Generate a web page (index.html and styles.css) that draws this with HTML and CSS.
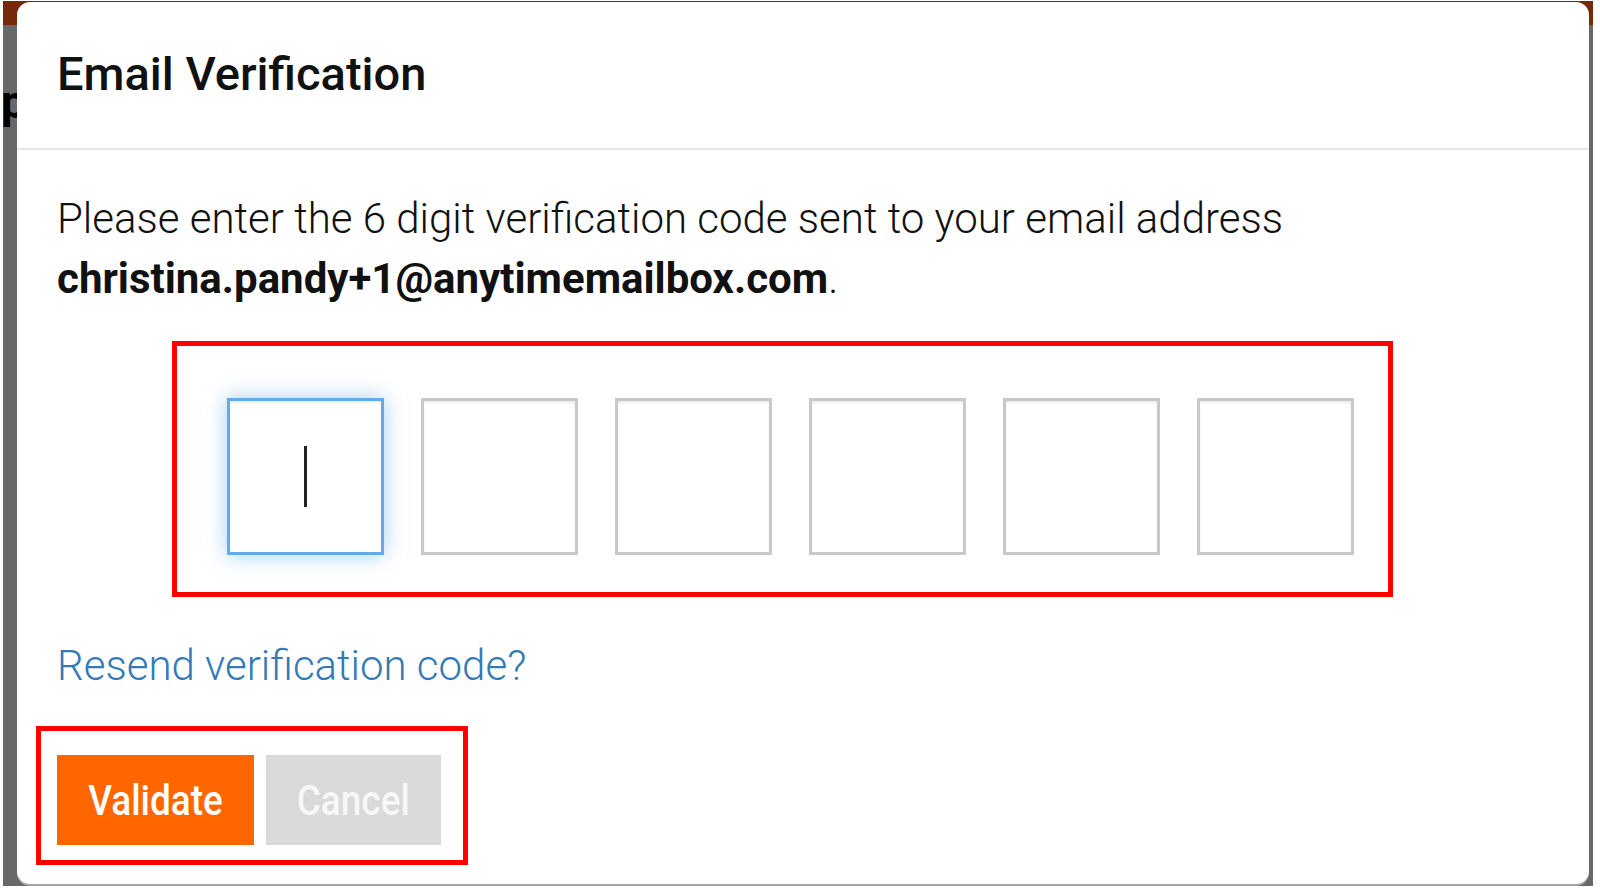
FILE: index.html
```html
<!DOCTYPE html>
<html lang="en">
<head>
<meta charset="utf-8">
<title>Email Verification</title>
<link rel="stylesheet" href="styles.css">
</head>
<body>
<div class="screen">
  <span class="bg-glyph">p</span>
  <div class="modal">
    <div class="modal-header">
      <h4 class="modal-title">Email Verification</h4>
    </div>
    <div class="modal-body">
      <p class="intro">Please enter the 6 digit verification code sent to your email address <strong>christina.pandy+1@anytimemailbox.com</strong>.</p>
      <div class="annot otp-annot">
        <div class="otp">
          <div class="otp-box is-focused"><span class="caret"></span></div>
          <div class="otp-box"></div>
          <div class="otp-box"></div>
          <div class="otp-box"></div>
          <div class="otp-box"></div>
          <div class="otp-box"></div>
        </div>
      </div>
      <p class="resend"><a href="#">Resend verification code?</a></p>
      <div class="annot actions">
        <button class="btn btn-validate" type="button"><span>Validate</span></button>
        <button class="btn btn-cancel" type="button"><span>Cancel</span></button>
      </div>
    </div>
  </div>
</div>
</body>
</html>
```
FILE: styles.css
```css
html, body {
  margin: 0;
  background: #ffffff;
}

.screen {
  position: relative;
  overflow: hidden;
  margin: 1px 7px 5px 3px;
  height: 885px;
  box-sizing: border-box;
  padding: 1px 4px 2px 14px;
  display: flex;
  background: linear-gradient(#76290a 0, #76290a 24px, #686868 24px);
}

.bg-glyph {
  position: absolute;
  left: -2px;
  top: 78px;
  font-family: Roboto, "Liberation Sans", sans-serif;
  font-weight: 700;
  font-size: 46px;
  line-height: 46px;
  color: #000;
}

.modal {
  position: relative;
  z-index: 1;
  flex: 1;
  display: flex;
  flex-direction: column;
  background: #ffffff;
  border-radius: 13px;
  box-shadow: 0 2px 0 #a5a5a5;
  font-family: Roboto, "Liberation Sans", sans-serif;
  color: #111;
}

.modal-header {
  padding: 39px 40px 41px;
  border-bottom: 2px solid #e5e5e5;
}

.modal-title {
  margin: 0;
  font-size: 47px;
  font-weight: 500;
  line-height: 66px;
}

.modal-body {
  padding: 39px 40px 0;
}

.intro {
  margin: 0;
  font-size: 42px;
  font-weight: 300;
  line-height: 60px;
}

.intro strong {
  font-weight: 700;
  white-space: nowrap;
}

.annot {
  border: 5px solid #ff0000;
  width: fit-content;
}

.otp-annot {
  margin: 32px 0 0 115px;
  padding: 52px 34px 37px 50px;
}

.otp {
  display: flex;
  gap: 37px;
}

.otp-box {
  width: 157px;
  height: 157px;
  box-sizing: border-box;
  border: 3px solid #c9c9c9;
  display: flex;
  align-items: center;
  justify-content: center;
  box-shadow: inset 0 2px 2px rgba(0, 0, 0, 0.075);
}

.otp-box.is-focused {
  border-color: #62aaea;
  box-shadow: inset 0 2px 2px rgba(0, 0, 0, 0.075), 0 0 20px rgba(102, 175, 233, 0.6);
}

.caret {
  width: 3px;
  height: 61px;
  background: #222;
}

.resend {
  margin: 39px 0 0;
  font-size: 42px;
  font-weight: 300;
  line-height: 59px;
}

.resend a {
  color: #337ab7;
  text-decoration: none;
}

.actions {
  margin: 31px 0 0 -21px;
  display: flex;
  gap: 12px;
  padding: 24px 22px 15px 16px;
}

.btn {
  height: 90px;
  border: 0;
  padding: 0;
  margin: 0;
  display: flex;
  align-items: center;
  justify-content: center;
  font-family: Roboto, "Liberation Sans", sans-serif;
  font-size: 42px;
  font-weight: 500;
  color: #ffffff;
}

.btn span {
  display: inline-block;
  transform: scaleX(0.88);
}

.btn-validate {
  width: 197px;
  background: #ff6600;
}

.btn-cancel {
  width: 175px;
  background: #d9d9d9;
  color: #f7f7f7;
}
```
